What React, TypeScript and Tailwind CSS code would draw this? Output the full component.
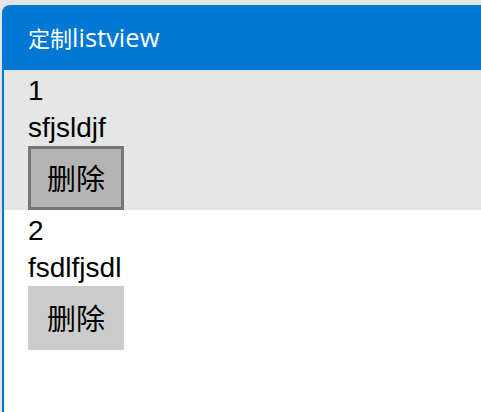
import React from "react";

const items = [
  { id: "1", text: "sfjsldjf", hover: true },
  { id: "2", text: "fsdlfjsdl", hover: false },
];

export default function App() {
  return (
    <div className="w-[481px] h-[412px] overflow-hidden bg-[#e4e4e4] pt-[5px] pl-[2px]">
      <div className="h-full w-[520px] rounded-tl-[8px] bg-[#0078d4] pl-[2px] flex flex-col">
        <div className="h-[65px] shrink-0 flex items-center pl-[24px] text-white">
          <span className="leading-none">
            <span className="text-[22px] [font-family:'Noto_Sans_CJK_SC',sans-serif]">定制</span>
            <span className="text-[25.5px] [font-family:'Open_Sans',sans-serif]">listview</span>
          </span>
        </div>
        <div className="flex-1 bg-white">
          {items.map((it) => (
            <div
              key={it.id}
              className={`h-[140px] pl-[24px] pt-[2px] ${it.hover ? "bg-[#e6e6e6]" : "bg-white"}`}
            >
              <div className="text-[28px] leading-[37px] text-black [font-family:'Liberation_Sans',sans-serif]">
                {it.id}
              </div>
              <div className="text-[28px] leading-[37px] text-black [font-family:'Liberation_Sans',sans-serif]">
                {it.text}
              </div>
              <div
                className={`w-[96px] h-[64px] flex items-center justify-center text-black text-[29px] [font-family:'Noto_Sans_CJK_SC',sans-serif] ${
                  it.hover ? "bg-[#b4b4b4] border-[3px] border-[#767676]" : "bg-[#cccccc]"
                }`}
              >
                删除
              </div>
            </div>
          ))}
        </div>
      </div>
    </div>
  );
}
